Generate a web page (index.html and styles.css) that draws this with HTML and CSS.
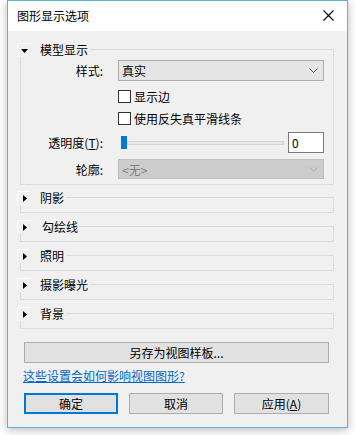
FILE: index.html
```html
<!DOCTYPE html>
<html lang="zh-CN">
<head>
<meta charset="utf-8">
<link rel="stylesheet" href="styles.css">
</head>
<body>
<div class="window">
  <div class="titlebar">
    <span class="title">图形显示选项</span>
    <svg class="close" width="11" height="11" viewBox="0 0 11 11"><path d="M0.5 0.5 L10.5 10.5 M10.5 0.5 L0.5 10.5" stroke="#000" stroke-width="1.1" fill="none"/></svg>
  </div>
  <div class="content">
    <div class="group">
      <div class="head"><span class="toggle"><svg width="7" height="4" viewBox="0 0 7 4"><path d="M0 0 H7 L3.5 4 Z" fill="#000"/></svg></span><span class="gtitle">模型显示</span></div>
      <div class="box open">
        <div class="row r1"><span class="lbl">样式:</span><div class="select"><span>真实</span><svg width="9" height="5" viewBox="0 0 9 5"><path d="M0.5 0.5 L4.5 4.5 L8.5 0.5" stroke="#555" fill="none"/></svg></div></div>
        <div class="row r2"><span class="lbl"></span><div class="check"><span class="cb"></span><span>显示边</span></div></div>
        <div class="row r3"><span class="lbl"></span><div class="check"><span class="cb"></span><span>使用反失真平滑线条</span></div></div>
        <div class="row r4"><span class="lbl">透明度(<u>T</u>):</span><div class="sliderwrap"><div class="slider"><span class="thumb"></span><span class="track"></span></div><div class="num">0</div></div></div>
        <div class="row r5"><span class="lbl">轮廓:</span><div class="select disabled"><span>&lt;无&gt;</span><svg width="9" height="5" viewBox="0 0 9 5"><path d="M0.5 0.5 L4.5 4.5 L8.5 0.5" stroke="#a8a8a8" fill="none"/></svg></div></div>
      </div>
    </div>
    <div class="group">
      <div class="head"><span class="toggle"><svg width="4" height="7" viewBox="0 0 4 7"><path d="M0 0 V7 L4 3.5 Z" fill="#000"/></svg></span><span class="gtitle">阴影</span></div>
      <div class="box"></div>
    </div>
    <div class="group">
      <div class="head"><span class="toggle"><svg width="4" height="7" viewBox="0 0 4 7"><path d="M0 0 V7 L4 3.5 Z" fill="#000"/></svg></span><span class="gtitle shift">勾绘线</span></div>
      <div class="box"></div>
    </div>
    <div class="group">
      <div class="head"><span class="toggle"><svg width="4" height="7" viewBox="0 0 4 7"><path d="M0 0 V7 L4 3.5 Z" fill="#000"/></svg></span><span class="gtitle">照明</span></div>
      <div class="box"></div>
    </div>
    <div class="group">
      <div class="head"><span class="toggle"><svg width="4" height="7" viewBox="0 0 4 7"><path d="M0 0 V7 L4 3.5 Z" fill="#000"/></svg></span><span class="gtitle">摄影曝光</span></div>
      <div class="box"></div>
    </div>
    <div class="group">
      <div class="head"><span class="toggle"><svg width="4" height="7" viewBox="0 0 4 7"><path d="M0 0 V7 L4 3.5 Z" fill="#000"/></svg></span><span class="gtitle">背景</span></div>
      <div class="box"></div>
    </div>
    <div class="btn save">另存为视图样板...</div>
    <a class="link" href="#">这些设置会如何影响视图图形?</a>
    <div class="buttons">
      <div class="btn primary">确定</div>
      <div class="btn">取消</div>
      <div class="btn wide">应用(<u>A</u>)</div>
    </div>
  </div>
</div>
</body>
</html>
```

FILE: styles.css
```css
* { box-sizing: border-box; }
html, body { margin: 0; padding: 0; }
body {
  background: #ffffff;
  width: 355px;
  height: 435px;
  overflow: hidden;
  font-family: "Noto Sans CJK SC", "Noto Sans", sans-serif;
  font-size: 12px;
  color: #000;
}
.window {
  margin-left: 7px;
  width: 341px;
  height: 428px;
  border: 1px solid #5ab4d2;
  background: #f0f0f0;
  box-shadow: 0 2px 9px rgba(0, 0, 0, 0.28);
  display: flex;
  flex-direction: column;
}
.titlebar {
  height: 30px;
  background: #ffffff;
  display: flex;
  align-items: center;
  justify-content: space-between;
  padding: 0 13px 0 9px;
  flex: none;
}
.title { font-size: 12px; line-height: 16px; }
.close { display: block; margin-top: -1px; }
.content {
  padding: 12px 13px 0 9px;
  display: flex;
  flex-direction: column;
}
.group {
  position: relative;
  margin-bottom: 7px;
}
.head {
  position: absolute;
  left: 0;
  top: 0;
  height: 14px;
  display: flex;
  align-items: center;
  background: #f0f0f0;
  padding-right: 2px;
}
.toggle {
  width: 14px;
  height: 14px;
  border-top: 1px solid #ffffff;
  border-left: 1px solid #ffffff;
  display: flex;
  align-items: center;
  justify-content: center;
}
.gtitle {
  margin-left: 9px;
  line-height: 14px;
  font-size: 12px;
}
.gtitle.shift { margin-left: 11px; }
.box {
  margin-top: 6px;
  margin-left: 3px;
  border: 1px solid #dcdcdc;
  height: 16px;
}
.box.open {
  height: auto;
  padding: 10px 9px 5px 0;
  margin-bottom: -1px;
}
.row {
  display: flex;
  align-items: center;
}
.lbl {
  width: 85px;
  flex: none;
  text-align: right;
  padding-right: 3px;
  margin-right: 12px;
  white-space: nowrap;
}
.lbl u { text-decoration: underline; }
.r1 { height: 21px; }
.r2 { height: 13px; margin-top: 9px; }
.r3 { height: 13px; margin-top: 9px; }
.r4 { height: 21px; margin-top: 7px; }
.r5 { height: 20px; margin-top: 6px; }
.select {
  width: 206px;
  height: 100%;
  border: 1px solid #adadad;
  background: #e5e5e5;
  display: flex;
  align-items: center;
  justify-content: space-between;
  padding: 0 5px 0 3px;
}
.select.disabled {
  background: #cccccc;
  border-color: #bfbfbf;
  color: #838383;
}
.check {
  display: flex;
  align-items: center;
  gap: 3px;
}
.cb {
  width: 13px;
  height: 13px;
  border: 1px solid #333333;
  background: #ffffff;
  flex: none;
}
.sliderwrap {
  width: 206px;
  height: 100%;
  display: flex;
  align-items: center;
  gap: 4px;
}
.slider {
  width: 166px;
  display: flex;
  align-items: center;
  padding-left: 3px;
}
.thumb {
  width: 6px;
  height: 13px;
  background: #0078d7;
  flex: none;
}
.track {
  flex: 1;
  height: 4px;
  background: #e7e7e7;
  border: 1px solid #d6d6d6;
}
.num {
  width: 36px;
  height: 21px;
  background: #ffffff;
  border: 1px solid #7a7a7a;
  padding-left: 3px;
  line-height: 19px;
}
.btn {
  height: 21px;
  border: 1px solid #adadad;
  background: #e1e1e1;
  display: flex;
  align-items: center;
  justify-content: center;
  font-size: 12px;
}
.save {
  margin: 6px 5px 0 7px;
}
.link {
  margin: 5px 0 0 6px;
  color: #0066cc;
  text-decoration: underline;
  line-height: 16px;
  align-self: flex-start;
}
.buttons {
  display: flex;
  gap: 11px;
  margin: 9px 5px 0 7px;
}
.buttons .btn { width: 94px; }
.buttons .btn.wide { width: 95px; }
.btn.primary { border: 2px solid #0078d7; }
```
